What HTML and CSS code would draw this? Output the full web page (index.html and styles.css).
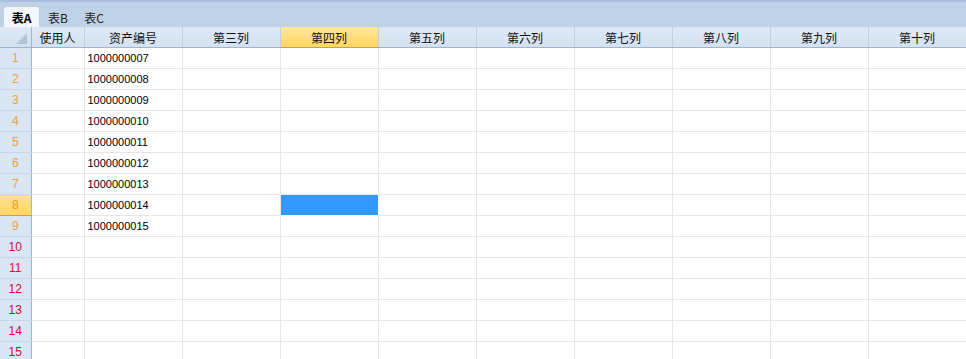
FILE: index.html
```html
<!DOCTYPE html>
<html lang="zh">
<head>
    <meta charset="UTF-8">
    <title>表格</title>
    <link rel="stylesheet" href="styles.css">
</head>
<body>
    <div class="tab-bar">
        <div class="tab active">表A</div>
        <div class="tab">表B</div>
        <div class="tab">表C</div>
    </div>

    <table class="sheet">
        <colgroup>
            <col class="c-idx">
            <col class="c-user">
            <col span="9" class="c-std">
        </colgroup>
        <thead>
            <tr>
                <th class="corner"><span class="corner-tri"></span></th>
                <th>使用人</th>
                <th>资产编号</th>
                <th>第三列</th>
                <th class="hl">第四列</th>
                <th>第五列</th>
                <th>第六列</th>
                <th>第七列</th>
                <th>第八列</th>
                <th>第九列</th>
                <th>第十列</th>
            </tr>
        </thead>
        <tbody id="rows"></tbody>
    </table>

    <script>
        var codes = ["1000000007", "1000000008", "1000000009", "1000000010", "1000000011",
                     "1000000012", "1000000013", "1000000014", "1000000015"];
        var body = document.getElementById("rows");
        for (var i = 1; i <= 15; i++) {
            var tr = document.createElement("tr");
            var idx = document.createElement("td");
            idx.className = "idx" + (i <= 9 ? " used" : " empty") + (i === 8 ? " hl" : "");
            idx.textContent = i;
            tr.appendChild(idx);
            for (var c = 0; c < 10; c++) {
                var td = document.createElement("td");
                if (c === 1 && codes[i - 1]) td.textContent = codes[i - 1];
                if (c === 3 && i === 8) td.className = "selected";
                tr.appendChild(td);
            }
            body.appendChild(tr);
        }
    </script>
</body>
</html>
```

FILE: styles.css
```css
body {
    margin: 0;
    padding: 0;
    background: #fff;
    font-family: "Liberation Sans", "Noto Sans CJK SC", sans-serif;
    font-size: 12px;
    color: #000;
    overflow: hidden;
}
.tab-bar {
    height: 27px;
    box-sizing: border-box;
    padding: 5px 0 0 4px;
    background: #bfd1e7;
    border-top: 2px solid #a9bfdb;
    display: flex;
    align-items: flex-end;
}
.tab {
    width: 36px;
    height: 20px;
    line-height: 21px;
    text-align: center;
    font-family: "Noto Sans CJK SC", sans-serif;
    font-size: 12px;
    color: #222;
}
.tab.active {
    width: 35px;
    margin-right: 1px;
    background: #f3f6fb;
    border-radius: 3px 3px 0 0;
    font-weight: bold;
    color: #000;
}
.sheet {
    border-collapse: collapse;
    table-layout: fixed;
    width: 966px;
}
.c-idx { width: 31px; }
.c-user { width: 53px; }
.c-std { width: 98px; }
.sheet th {
    height: 20px;
    padding: 0;
    background: linear-gradient(#dfe9f5, #d3e1f1);
    border-right: 1px solid #bfcfe2;
    border-bottom: 1px solid #9eb6ce;
    font-family: "Noto Sans CJK SC", sans-serif;
    font-weight: normal;
    font-size: 12px;
    text-align: center;
    color: #111;
}
.sheet th.hl {
    background: linear-gradient(#ffe89a, #fdd55f);
    border-left: 1px solid #c2a35a;
    border-bottom-color: #c2a35a;
}
.sheet th.corner {
    position: relative;
    border-right: 1px solid #9eb6ce;
}
.corner-tri {
    position: absolute;
    right: 4px;
    bottom: 3px;
    width: 0;
    height: 0;
    border-left: 11px solid transparent;
    border-bottom: 11px solid #b3c4d9;
}
.sheet td {
    height: 20px;
    padding: 0 0 0 3px;
    border-right: 1px solid #e6e6e6;
    border-bottom: 1px solid #e6e6e6;
    white-space: nowrap;
    overflow: hidden;
    font-size: 11px;
}
.sheet td.idx {
    padding: 0;
    text-align: center;
    background: #dbe6f4;
    border-right: 1px solid #9eb6ce;
    border-bottom: 1px solid #c6d5e7;
    font-size: 12px;
}
.sheet td.idx.used { color: #e8a23a; }
.sheet td.idx.empty { color: #c8102e; }
.sheet td.idx.hl {
    background: linear-gradient(#ffe190, #fdd560);
    border-top: 1px solid #c2a35a;
    border-bottom: 1px solid #c2a35a;
    color: #e89a20;
}
.sheet td.selected {
    background: #3399ff;
    border-right-color: #fff;
    border-bottom-color: #fff;
}
```
